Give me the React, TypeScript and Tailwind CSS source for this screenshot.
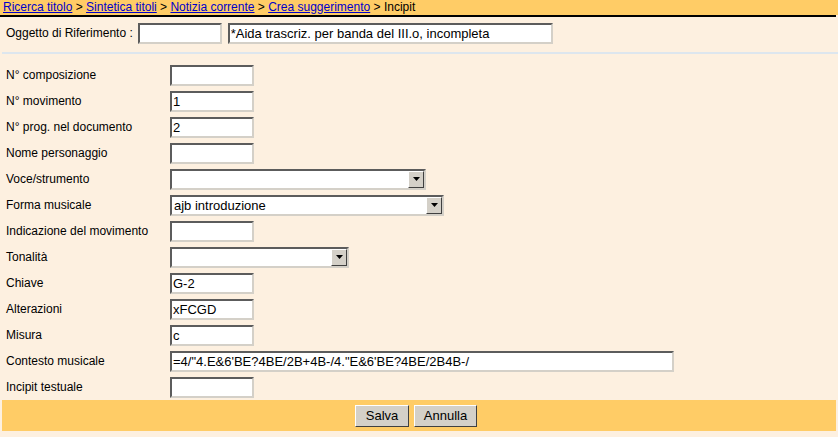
import React from 'react';

const inset = 'border-2 border-t-[#5c5c5c] border-l-[#5c5c5c] border-b-[#d4d0c8] border-r-[#d4d0c8] bg-white';

function Field({ value = '', w = 'w-[84px]' }: { value?: string; w?: string }) {
  return (
    <input
      readOnly
      defaultValue={value}
      className={`${inset} ${w} h-[21px] px-[1px] text-[13px] text-black outline-none`}
    />
  );
}

function Select({ value = '', w }: { value?: string; w: string }) {
  return (
    <div className={`${inset} ${w} h-[21px] flex items-center`}>
      <span className="flex-1 pl-[2px] text-[13px] text-black leading-none">{value}</span>
      <div className="w-[16px] h-[17px] bg-[#d4d0c8] border border-t-white border-l-white border-b-[#404040] border-r-[#404040] flex items-center justify-center">
        <svg width="7" height="4" viewBox="0 0 7 4">
          <path d="M0 0h7L3.5 4z" fill="#000" />
        </svg>
      </div>
    </div>
  );
}

function Row({ label, children }: { label: string; children: React.ReactNode }) {
  return (
    <div className="h-[26px] flex items-center">
      <div className="w-[170px] pl-[6px]">{label}</div>
      {children}
    </div>
  );
}

function Crumb({ children }: { children: React.ReactNode }) {
  return <a href="#" className="text-[#0000cc] underline">{children}</a>;
}

export default function App() {
  return (
    <div className="w-[838px] h-[437px] bg-[#fdf0e0] text-[12px] text-black" style={{ fontFamily: '"Liberation Sans", Arial, sans-serif' }}>
      <div className="h-[15px] bg-[#ffcc66] pl-[3px] leading-[15px] whitespace-nowrap">
        <Crumb>Ricerca titolo</Crumb> &gt; <Crumb>Sintetica titoli</Crumb> &gt; <Crumb>Notizia corrente</Crumb> &gt; <Crumb>Crea suggerimento</Crumb> &gt; Incipit
      </div>
      <div className="h-[2px] bg-black mr-[2px]" />
      <div className="h-[31px] flex items-center pl-[6px] pt-[1px]">
        <span className="mr-[5px]">Oggetto di Riferimento :</span>
        <Field />
        <div className="w-[6px]" />
        <Field value="*Aida trascriz. per banda del III.o, incompleta" w="w-[325px]" />
      </div>
      <div className="h-[4px]" />
      <div className="h-[2px] bg-[#dde6ee] ml-[2px]" />
      <div className="h-[8px]" />
      <Row label="N° composizione"><Field /></Row>
      <Row label="N° movimento"><Field value="1" /></Row>
      <Row label="N° prog. nel documento"><Field value="2" /></Row>
      <Row label="Nome personaggio"><Field /></Row>
      <Row label="Voce/strumento"><Select w="w-[256px]" /></Row>
      <Row label="Forma musicale"><Select value="ajb introduzione" w="w-[274px]" /></Row>
      <Row label="Indicazione del movimento"><Field /></Row>
      <Row label="Tonalità"><Select w="w-[179px]" /></Row>
      <Row label="Chiave"><Field value="G-2" /></Row>
      <Row label="Alterazioni"><Field value="xFCGD" /></Row>
      <Row label="Misura"><Field value="c" /></Row>
      <Row label="Contesto musicale"><Field value={`=4/"4.E&6'BE?4BE/2B+4B-/4."E&6'BE?4BE/2B4B-/`} w="w-[504px]" /></Row>
      <Row label="Incipit testuale"><Field /></Row>
      <div className="h-[31px] mx-[2px] bg-[#ffcc66] flex items-center justify-center gap-[5px] pr-[6px]">
        <button className="w-[54px] h-[22px] bg-[#d4d0c8] border border-t-white border-l-white border-b-[#404040] border-r-[#404040] text-[13px]">Salva</button>
        <button className="w-[63px] h-[22px] bg-[#d4d0c8] border border-t-white border-l-white border-b-[#404040] border-r-[#404040] text-[13px]">Annulla</button>
      </div>
    </div>
  );
}
